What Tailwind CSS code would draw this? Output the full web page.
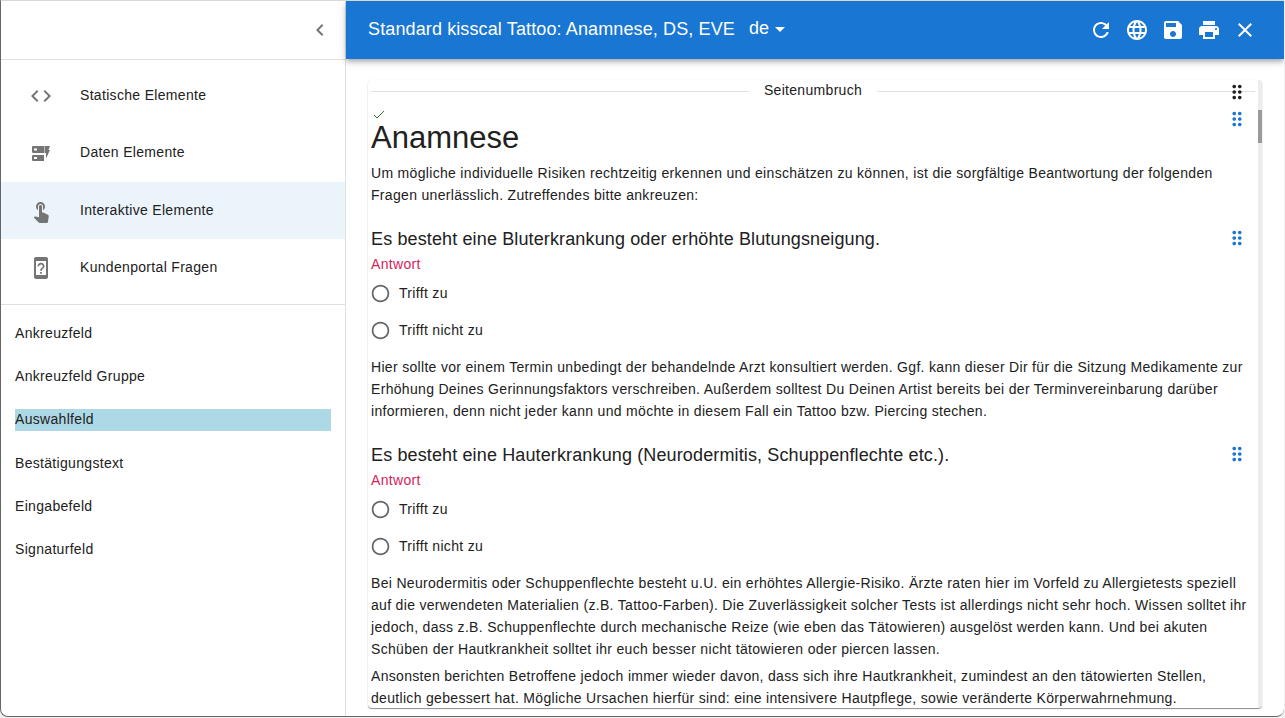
<!DOCTYPE html>
<html lang="de"><head><meta charset="utf-8">
<script src="https://cdn.jsdelivr.net/npm/@tailwindcss/browser@4"></script>
<title>Editor</title></head>
<body class="bg-[#f0f0f0]">
<div class="h-[718px] w-[1285px] overflow-hidden pr-px pb-px font-['Liberation_Sans',sans-serif] text-[14px] tracking-[0.315px] text-[#212121]">
<div class="flex h-full w-full overflow-hidden rounded-b-lg border-t border-b border-l border-t-[#d8d8d8] border-b-[#666] border-l-[#666] bg-white">
  <aside class="flex w-[345px] shrink-0 flex-col border-r border-[#e0e0e0]">
    <div class="flex h-[59px] shrink-0 items-center justify-end border-b border-[#e0e0e0] pr-[13px]">
      <svg class="h-6 w-6" viewBox="0 0 24 24" fill="#757575"><path d="M15.41 7.41L14 6l-6 6 6 6 1.41-1.41L10.83 12z"/></svg>
    </div>
    <nav class="flex h-[245px] shrink-0 flex-col border-b border-[#e0e0e0] pt-[7px]">
      <div class="flex h-[57px] items-center pl-[28px]"><svg class="mr-[27px] h-6 w-6" viewBox="0 0 24 24" fill="#757575"><path d="M9.4 16.6L4.8 12l4.6-4.6L8 6l-6 6 6 6 1.4-1.4zm5.2 0l4.6-4.6-4.6-4.6L16 6l6 6-6 6-1.4-1.4z"/></svg>Statische Elemente</div>
      <div class="flex h-[58px] items-center pb-[1px] pl-[28px]"><svg class="mr-[27px] h-6 w-6" viewBox="0 0 24 24" fill="#757575"><path d="M4.200 5H15.500V12H4.200A1.200 1.200 0 0 1 3 10.800V6.200A1.200 1.200 0 0 1 4.200 5zM5 7.500v2h3v-2zM4.200 14H15V20H4.200A1.200 1.200 0 0 1 3 18.800V15.200A1.200 1.200 0 0 1 4.200 14zM5 16v2h3v-2zM16 5H21l-1.500 4H21l-4 8.500V12h-1z"/></svg>Daten Elemente</div>
      <div class="flex h-[57px] items-center bg-[#ebf3fb] pl-[28px]"><svg class="mr-[27px] h-6 w-6" viewBox="0 0 24 24" fill="#757575"><path d="M9 11.24V7.5C9 6.12 10.12 5 11.5 5S14 6.12 14 7.5v3.74c1.21-.81 2-2.18 2-3.74C16 5.01 13.99 3 11.5 3S7 5.01 7 7.5c0 1.56.79 2.93 2 3.74zm9.84 4.63l-4.54-2.26c-.17-.07-.35-.11-.54-.11H13v-6c0-.83-.67-1.5-1.5-1.5S10 6.67 10 7.5v10.74l-3.43-.72c-.08-.01-.15-.03-.24-.03-.31 0-.59.13-.79.33l-.79.8 4.94 4.94c.27.27.65.44 1.06.44h6.79c.75 0 1.33-.55 1.44-1.28l.75-5.27c.01-.07.02-.14.02-.2 0-.62-.38-1.16-.91-1.38z"/></svg>Interaktive Elemente</div>
      <div class="flex h-[57px] items-center pl-[28px]"><svg class="mr-[27px] h-6 w-6" viewBox="0 0 24 24" fill="#757575"><path d="M17 1.01L7 1c-1.1 0-2 .9-2 2v18c0 1.1.9 2 2 2h10c1.1 0 2-.9 2-2V3c0-1.1-.9-1.99-2-1.99zM17 19H7V5h10v14zM12 6.72c-1.96 0-3.56 1.58-3.56 3.54h1.78c0-.98.8-1.77 1.78-1.77s1.78.79 1.78 1.77c0 1.78-2.67 1.56-2.67 4.45h1.78c0-2 2.67-2.22 2.67-4.45 0-1.96-1.6-3.54-3.56-3.54zM11.11 16h1.78v1.78h-1.78z"/></svg>Kundenportal Fragen</div>
    </nav>
    <ul class="flex flex-col gap-[21.3px] pt-[17px] pr-[14px] pl-[14px]">
      <li class="h-[22px] leading-[22px]">Ankreuzfeld</li>
      <li class="h-[22px] leading-[22px]">Ankreuzfeld Gruppe</li>
      <li class="h-[22px] bg-[#add8e6] leading-[21px]">Auswahlfeld</li>
      <li class="h-[22px] leading-[22px]">Bestätigungstext</li>
      <li class="h-[22px] leading-[22px]">Eingabefeld</li>
      <li class="h-[22px] leading-[22px]">Signaturfeld</li>
    </ul>
  </aside>
  <main class="flex min-w-0 flex-1 flex-col">
    <header class="relative z-10 flex h-[58px] shrink-0 items-center bg-[#1976d2] pr-[27px] pl-[22px] text-white shadow-[0_2px_4px_-1px_rgba(0,0,0,0.2),0_4px_5px_0_rgba(0,0,0,0.14),0_1px_10px_0_rgba(0,0,0,0.12)]">
      <h1 class="pb-[2px] text-[18px] font-normal tracking-[0.12px]">Standard kisscal Tattoo: Anamnese, DS, EVE</h1>
      <div class="ml-[14px] flex items-center pb-[3px] text-[18px] tracking-normal">de<svg class="ml-[-1px] h-6 w-6" viewBox="0 0 24 24" fill="#fff"><path d="M7 10l5 5 5-5z"/></svg></div>
      <div class="ml-auto flex items-center gap-[12px]">
        <svg class="h-6 w-6" viewBox="0 0 24 24" fill="#fff"><path d="M17.65 6.35C16.2 4.9 14.21 4 12 4c-4.42 0-7.99 3.58-7.99 8s3.57 8 7.99 8c3.73 0 6.84-2.55 7.73-6h-2.08c-.82 2.33-3.04 4-5.65 4-3.31 0-6-2.69-6-6s2.69-6 6-6c1.66 0 3.14.69 4.22 1.78L13 11h7V4l-2.35 2.35z"/></svg>
        <svg class="h-6 w-6" viewBox="0 0 24 24" fill="#fff"><path d="M11.99 2C6.47 2 2 6.48 2 12s4.47 10 9.99 10C17.52 22 22 17.52 22 12S17.52 2 11.99 2zm6.93 6h-2.95c-.32-1.25-.78-2.45-1.38-3.56 1.84.63 3.37 1.91 4.33 3.56zM12 4.04c.83 1.2 1.48 2.53 1.91 3.96h-3.82c.43-1.43 1.08-2.76 1.91-3.96zM4.26 14C4.1 13.36 4 12.69 4 12s.1-1.36.26-2h3.38c-.08.66-.14 1.32-.14 2 0 .68.06 1.34.14 2H4.26zm.82 2h2.95c.32 1.25.78 2.45 1.38 3.56-1.84-.63-3.37-1.9-4.33-3.56zm2.95-8H5.08c.96-1.66 2.49-2.93 4.33-3.56C8.81 5.55 8.35 6.75 8.03 8zM12 19.96c-.83-1.2-1.48-2.53-1.91-3.96h3.82c-.43 1.43-1.08 2.76-1.91 3.96zM14.34 14H9.66c-.09-.66-.16-1.32-.16-2 0-.68.07-1.35.16-2h4.68c.09.65.16 1.32.16 2 0 .68-.07 1.34-.16 2zm.25 5.56c.6-1.11 1.06-2.31 1.38-3.56h2.95c-.96 1.65-2.49 2.93-4.33 3.56zM16.36 14c.08-.66.14-1.32.14-2 0-.68-.06-1.34-.14-2h3.38c.16.64.26 1.31.26 2s-.1 1.36-.26 2h-3.38z"/></svg>
        <svg class="h-6 w-6" viewBox="0 0 24 24" fill="#fff"><path d="M17 3H5c-1.11 0-2 .9-2 2v14c0 1.1.89 2 2 2h14c1.1 0 2-.9 2-2V7l-4-4zm-5 16c-1.66 0-3-1.34-3-3s1.34-3 3-3 3 1.34 3 3-1.34 3-3 3zm3-10H5V5h10v4z"/></svg>
        <svg class="h-6 w-6" viewBox="0 0 24 24" fill="#fff"><path d="M19 8H5c-1.66 0-3 1.34-3 3v6h4v4h12v-4h4v-6c0-1.66-1.34-3-3-3zm-3 11H8v-5h8v5zm3-7c-.55 0-1-.45-1-1s.45-1 1-1 1 .45 1 1-.45 1-1 1zm-1-9H6v4h12V3z"/></svg>
        <svg class="h-6 w-6" viewBox="0 0 24 24" fill="#fff"><path d="M19 6.41L17.59 5 12 10.59 6.41 5 5 6.41 10.59 12 5 17.59 6.41 19 12 13.41 17.59 19 19 17.59 13.41 12z"/></svg>
      </div>
    </header>
    <div class="min-h-0 flex-1 pt-[21px] pr-[22px] pb-[8px] pl-[22px]">
      <div class="relative h-full overflow-hidden rounded-[4px] bg-white shadow-[0_1px_1px_rgba(0,0,0,0.45),0_0_2px_rgba(0,0,0,0.06)]">
        <div class="absolute top-0 right-0 h-full w-[4px] bg-[#ececec]"><div class="mt-[30px] h-[33px] w-[4px] bg-[#9a9a9a]"></div></div>
        <div class="h-full overflow-hidden pr-[6px] pl-[3px]">
          <div class="relative flex h-[22px] items-center pr-px">
            <div class="h-px flex-1 bg-[#e0e0e0]"></div><span class="px-[15px] pb-[2px]">Seitenumbruch</span><div class="h-px flex-1 bg-[#e0e0e0]"></div>
            <svg class="absolute top-[1px] right-[8px] h-[22px] w-[22px]" viewBox="0 0 24 24" fill="#212121"><path d="M11 18c0 1.1-.9 2-2 2s-2-.9-2-2 .9-2 2-2 2 .9 2 2zm-2-8c-1.100 0-2 .9-2 2s.9 2 2 2 2-.9 2-2-.9-2-2-2zm0-6c-1.100 0-2 .9-2 2s.9 2 2 2 2-.9 2-2-.9-2-2-2zm6 4c1.100 0 2-.9 2-2s-.9-2-2-2-2 .9-2 2 .9 2 2 2zm0 2c-1.100 0-2 .9-2 2s.9 2 2 2 2-.9 2-2-.9-2-2-2zm0 6c-1.100 0-2 .9-2 2s.9 2 2 2 2-.9 2-2-.9-2-2-2z"/></svg>
          </div>
          <section class="relative">
            <svg class="mt-[8px] ml-[2px] block h-[10px] w-[12px]" viewBox="0 0 12 10" fill="none" stroke="#2e7d32" stroke-width="1"><path d="M1 5l3 3 7-7"/></svg>
            <svg class="absolute top-[-2px] right-[8px] h-[22px] w-[22px]" viewBox="0 0 24 24" fill="#1976d2"><path d="M11 18c0 1.1-.9 2-2 2s-2-.9-2-2 .9-2 2-2 2 .9 2 2zm-2-8c-1.100 0-2 .9-2 2s.9 2 2 2 2-.9 2-2-.9-2-2-2zm0-6c-1.100 0-2 .9-2 2s.9 2 2 2 2-.9 2-2-.9-2-2-2zm6 4c1.100 0 2-.9 2-2s-.9-2-2-2-2 .9-2 2 .9 2 2 2zm0 2c-1.100 0-2 .9-2 2s.9 2 2 2 2-.9 2-2-.9-2-2-2zm0 6c-1.100 0-2 .9-2 2s.9 2 2 2 2-.9 2-2-.9-2-2-2z"/></svg>
            <h2 class="-mt-[1px] text-[31px] leading-[37px] font-normal tracking-normal">Anamnese</h2>
            <p class="mt-[6px] leading-[22px]">Um mögliche individuelle Risiken rechtzeitig erkennen und einschätzen zu können, ist die sorgfältige Beantwortung der folgenden<br>Fragen unerlässlich. Zutreffendes bitte ankreuzen:</p>
          </section>
          <section class="relative mt-[22px]">
            <svg class="absolute top-[-1px] right-[8px] h-[22px] w-[22px]" viewBox="0 0 24 24" fill="#1976d2"><path d="M11 18c0 1.1-.9 2-2 2s-2-.9-2-2 .9-2 2-2 2 .9 2 2zm-2-8c-1.100 0-2 .9-2 2s.9 2 2 2 2-.9 2-2-.9-2-2-2zm0-6c-1.100 0-2 .9-2 2s.9 2 2 2 2-.9 2-2-.9-2-2-2zm6 4c1.100 0 2-.9 2-2s-.9-2-2-2-2 .9-2 2 .9 2 2 2zm0 2c-1.100 0-2 .9-2 2s.9 2 2 2 2-.9 2-2-.9-2-2-2zm0 6c-1.100 0-2 .9-2 2s.9 2 2 2 2-.9 2-2-.9-2-2-2z"/></svg>
            <h3 class="text-[18px] leading-[22px] font-normal tracking-[0.13px]">Es besteht eine Bluterkrankung oder erhöhte Blutungsneigung.</h3>
            <div class="mt-[3px] leading-[22px] text-[#d6245a]">Antwort</div>
            <div class="mt-[7px] -ml-[1.5px] flex h-[22px] items-center gap-[8.5px]"><svg class="h-[21px] w-[21px]" viewBox="0 0 24 24" fill="#666"><path d="M12 2C6.48 2 2 6.48 2 12s4.48 10 10 10 10-4.48 10-10S17.52 2 12 2zm0 18c-4.42 0-8-3.58-8-8s3.58-8 8-8 8 3.58 8 8-3.58 8-8 8z"/></svg>Trifft zu</div>
            <div class="mt-[15px] -ml-[1.5px] flex h-[22px] items-center gap-[8.5px]"><svg class="h-[21px] w-[21px]" viewBox="0 0 24 24" fill="#666"><path d="M12 2C6.48 2 2 6.48 2 12s4.48 10 10 10 10-4.48 10-10S17.52 2 12 2zm0 18c-4.42 0-8-3.58-8-8s3.58-8 8-8 8 3.58 8 8-3.58 8-8 8z"/></svg>Trifft nicht zu</div>
            <p class="mt-[15px] leading-[22px]">Hier sollte vor einem Termin unbedingt der behandelnde Arzt konsultiert werden. Ggf. kann dieser Dir für die Sitzung Medikamente zur<br>Erhöhung Deines Gerinnungsfaktors verschreiben. Außerdem solltest Du Deinen Artist bereits bei der Terminvereinbarung darüber<br>informieren, denn nicht jeder kann und möchte in diesem Fall ein Tattoo bzw. Piercing stechen.</p>
          </section>
          <section class="relative mt-[22px]">
            <svg class="absolute top-[-1px] right-[8px] h-[22px] w-[22px]" viewBox="0 0 24 24" fill="#1976d2"><path d="M11 18c0 1.1-.9 2-2 2s-2-.9-2-2 .9-2 2-2 2 .9 2 2zm-2-8c-1.100 0-2 .9-2 2s.9 2 2 2 2-.9 2-2-.9-2-2-2zm0-6c-1.100 0-2 .9-2 2s.9 2 2 2 2-.9 2-2-.9-2-2-2zm6 4c1.100 0 2-.9 2-2s-.9-2-2-2-2 .9-2 2 .9 2 2 2zm0 2c-1.100 0-2 .9-2 2s.9 2 2 2 2-.9 2-2-.9-2-2-2zm0 6c-1.100 0-2 .9-2 2s.9 2 2 2 2-.9 2-2-.9-2-2-2z"/></svg>
            <h3 class="text-[18px] leading-[22px] font-normal tracking-[0.13px]">Es besteht eine Hauterkrankung (Neurodermitis, Schuppenflechte etc.).</h3>
            <div class="mt-[3px] leading-[22px] text-[#d6245a]">Antwort</div>
            <div class="mt-[7px] -ml-[1.5px] flex h-[22px] items-center gap-[8.5px]"><svg class="h-[21px] w-[21px]" viewBox="0 0 24 24" fill="#666"><path d="M12 2C6.48 2 2 6.48 2 12s4.48 10 10 10 10-4.48 10-10S17.52 2 12 2zm0 18c-4.42 0-8-3.58-8-8s3.58-8 8-8 8 3.58 8 8-3.58 8-8 8z"/></svg>Trifft zu</div>
            <div class="mt-[15px] -ml-[1.5px] flex h-[22px] items-center gap-[8.5px]"><svg class="h-[21px] w-[21px]" viewBox="0 0 24 24" fill="#666"><path d="M12 2C6.48 2 2 6.48 2 12s4.48 10 10 10 10-4.48 10-10S17.52 2 12 2zm0 18c-4.42 0-8-3.58-8-8s3.58-8 8-8 8 3.58 8 8-3.58 8-8 8z"/></svg>Trifft nicht zu</div>
            <p class="mt-[15px] leading-[22px]">Bei Neurodermitis oder Schuppenflechte besteht u.U. ein erhöhtes Allergie-Risiko. Ärzte raten hier im Vorfeld zu Allergietests speziell<br>auf die verwendeten Materialien (z.B. Tattoo-Farben). Die Zuverlässigkeit solcher Tests ist allerdings nicht sehr hoch. Wissen solltet ihr<br>jedoch, dass z.B. Schuppenflechte durch mechanische Reize (wie eben das Tätowieren) ausgelöst werden kann. Und bei akuten<br>Schüben der Hautkrankheit solltet ihr euch besser nicht tätowieren oder piercen lassen.</p>
            <p class="mt-[5px] leading-[22px]">Ansonsten berichten Betroffene jedoch immer wieder davon, dass sich ihre Hautkrankheit, zumindest an den tätowierten Stellen,<br>deutlich gebessert hat. Mögliche Ursachen hierfür sind: eine intensivere Hautpflege, sowie veränderte Körperwahrnehmung.</p>
          </section>
        </div>
      </div>
    </div>
  </main>
</div>
</div>
</body></html>
